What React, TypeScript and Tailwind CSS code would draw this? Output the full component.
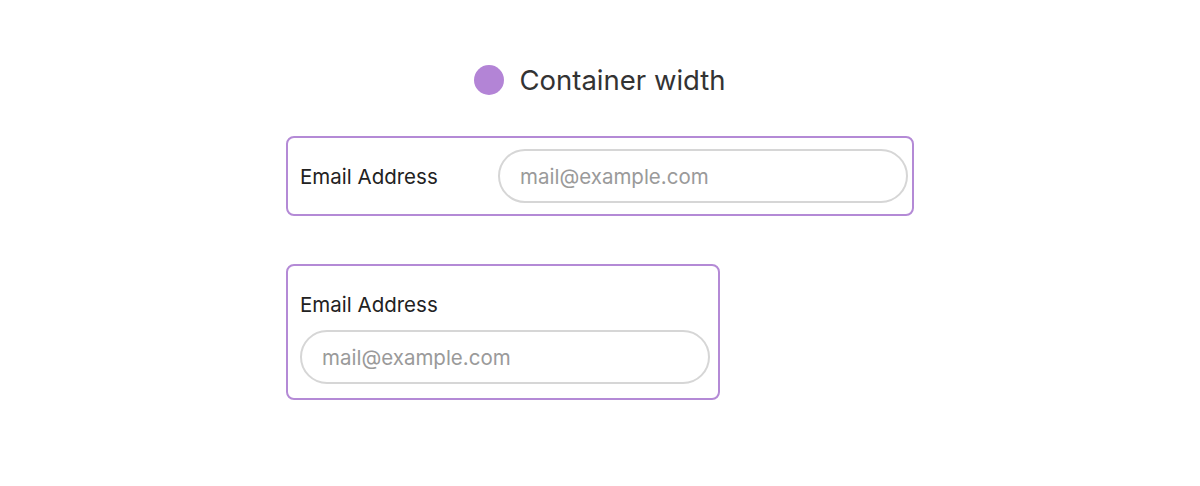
import React from 'react';

const font = { fontFamily: 'Inter, "Noto Sans", sans-serif' };

const EmailInput = ({ className = '' }: { className?: string }) => (
  <input
    type="email"
    placeholder="mail@example.com"
    className={`h-[54px] rounded-full border-2 border-[#d6d6d6] bg-white px-[20px] text-[20.5px] text-[#333] placeholder:text-[#9a9a9a] outline-none ${className}`}
  />
);

const App = () => {
  return (
    <div className="min-h-screen bg-white" style={font}>
      <div className="mx-auto w-[628px] pt-[62px]">
        {/* Legend */}
        <div className="flex items-center justify-center gap-[15px]">
          <span className="h-[30px] w-[30px] rounded-full bg-[#b384d6]" />
          <span className="text-[27.5px] leading-[36px] text-[#333]">Container width</span>
        </div>

        {/* Wide container: inline */}
        <div className="mt-[38px] flex h-[80px] items-center rounded-[8px] border-2 border-[#b48ad6] pl-[12px] pr-[4px]">
          <label className="w-[198px] shrink-0 pt-[3px] text-[20.5px] text-[#222]">Email Address</label>
          <EmailInput className="flex-1" />
        </div>

        {/* Narrow container: stacked */}
        <div className="mt-[48px] flex w-[434px] flex-col rounded-[8px] border-2 border-[#b48ad6] pl-[12px] pr-[8px] pt-[27px] pb-[14px]">
          <label className="text-[20.5px] leading-[24px] text-[#222]">Email Address</label>
          <EmailInput className="mt-[13px] w-full" />
        </div>
      </div>
    </div>
  );
};

export default App;
